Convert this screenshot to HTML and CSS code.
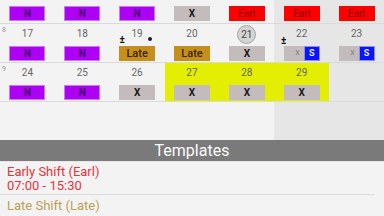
FILE: index.html
```html
<!DOCTYPE html>
<html>
<head>
<meta charset="utf-8">
<link rel="stylesheet" href="styles.css">
</head>
<body>
<div class="cal">
  <div class="cell r1"><div class="badge n">N</div></div>
  <div class="cell r1"><div class="badge n">N</div></div>
  <div class="cell r1"><div class="badge n">N</div></div>
  <div class="cell r1"><div class="badge x">X</div></div>
  <div class="cell r1"><div class="badge e">Earl</div></div>
  <div class="cell r1 we"><div class="badge e">Earl</div></div>
  <div class="cell r1 we"><div class="badge e">Earl</div></div>

  <div class="cell rw"><span class="wk">8</span><div class="num">17</div><div class="badge n">N</div></div>
  <div class="cell rw"><div class="num">18</div><div class="badge n">N</div></div>
  <div class="cell rw"><div class="num"><span class="pm pm19">±</span>19<span class="dot"></span></div><div class="badge l">Late</div></div>
  <div class="cell rw"><div class="num">20</div><div class="badge l">Late</div></div>
  <div class="cell rw"><div class="num"><span class="today">21</span></div><div class="badge x">X</div></div>
  <div class="cell rw we"><div class="num"><span class="pm pm22">±</span>22</div><div class="badge split"><span class="sx">X</span><span class="ss">S</span></div></div>
  <div class="cell rw we"><div class="num">23</div><div class="badge split"><span class="sx">X</span><span class="ss">S</span></div></div>

  <div class="cell rw"><span class="wk">9</span><div class="num">24</div><div class="badge n">N</div></div>
  <div class="cell rw"><div class="num">25</div><div class="badge n">N</div></div>
  <div class="cell rw"><div class="num">26</div><div class="badge x">X</div></div>
  <div class="cell rw hl"><div class="num">27</div><div class="badge x">X</div></div>
  <div class="cell rw hl"><div class="num">28</div><div class="badge x">X</div></div>
  <div class="cell rw hl"><div class="num">29</div><div class="badge x">X</div></div>
  <div class="cell rw we"></div>

  <div class="cell fill"></div>
  <div class="cell fill"></div>
  <div class="cell fill"></div>
  <div class="cell fill"></div>
  <div class="cell fill"></div>
  <div class="cell fill we"></div>
  <div class="cell fill we"></div>
</div>
<div class="thead">Templates</div>
<div class="tlist">
  <div class="titem early"><div>Early Shift (Earl)</div><div>07:00 - 15:30</div></div>
  <div class="titem late"><div>Late Shift (Late)</div></div>
</div>
</body>
</html>
```
FILE: styles.css
```css
html, body {
  margin: 0;
  padding: 0;
}
body {
  width: 384px;
  height: 216px;
  overflow: hidden;
  background: #f3f3f3;
  font-family: Roboto, "Liberation Sans", sans-serif;
}
.cal {
  display: grid;
  grid-template-columns: repeat(7, 1fr);
}
.cell {
  position: relative;
  display: flex;
  flex-direction: column;
  align-items: center;
  border-bottom: 1px solid #dadada;
}
.cell.we {
  background: #e6e6e6;
}
.cell.hl {
  background: #e3ee00;
}
.r1 {
  box-sizing: border-box;
  height: 24px;
  padding-top: 6px;
}
.rw {
  box-sizing: border-box;
  height: 39px;
  padding-top: 2px;
}
.fill {
  height: 38px;
  border-bottom: none;
}
.wk {
  position: absolute;
  left: 2px;
  top: 2px;
  font-size: 7px;
  color: #9a9a9a;
}
.num {
  position: relative;
  height: 16px;
  line-height: 16px;
  font-size: 10px;
  color: #666;
  margin-bottom: 4px;
}
.badge {
  width: 36px;
  height: 15px;
  line-height: 15px;
  box-sizing: border-box;
  text-align: center;
  font-size: 10px;
  font-weight: bold;
}
.badge.n {
  background: #ad00f5;
  color: #45006a;
  border: 1px solid #c877f5;
  line-height: 13px;
}
.badge.e {
  background: #ff0000;
  color: #9a0000;
  font-weight: 500;
}
.badge.x {
  background: #c4bcbc;
  color: #1a1a1a;
}
.badge.l {
  background: #c58f1c;
  color: #3a2600;
  font-size: 11px;
  font-weight: 500;
}
.badge.split {
  display: flex;
  background: transparent;
}
.sx {
  width: 20px;
  background: #c4bcbc;
  color: #7a7a7a;
  font-size: 7px;
  font-weight: normal;
  text-align: right;
  padding-right: 4px;
  box-sizing: border-box;
}
.ss {
  flex: 1;
  background: #0a14ff;
  color: #e8e8ff;
  border: 1px solid #8c8cff;
  line-height: 13px;
  font-size: 9px;
}
.today {
  display: inline-block;
  width: 17px;
  height: 17px;
  line-height: 17px;
  margin-top: -1px;
  border-radius: 50%;
  background: #d4d4d4;
  border: 1px solid #a4a4a4;
  text-align: center;
  color: #444;
}
.pm {
  position: absolute;
  top: 6px;
  font-size: 10px;
  font-weight: bold;
  color: #111;
}
.pm19 {
  left: -12px;
}
.pm22 {
  left: -15px;
  top: 7px;
}
.dot {
  position: absolute;
  right: -9px;
  top: 11px;
  width: 4px;
  height: 4px;
  border-radius: 50%;
  background: #1a1a3a;
}
.thead {
  height: 21px;
  line-height: 21px;
  background: #7a7a7a;
  color: #fafafa;
  text-align: center;
  font-size: 16px;
  border-bottom: 1px solid #e8e8e8;
}
.tlist {
  padding-right: 9px;
}
.titem {
  padding: 3px 0 1px 7px;
  font-size: 13px;
  line-height: 14px;
  border-bottom: 1px solid #dcdcdc;
}
.titem.early {
  color: #e5353d;
}
.titem.late {
  color: #bba058;
  padding-top: 4px;
  border-bottom: none;
}
```
